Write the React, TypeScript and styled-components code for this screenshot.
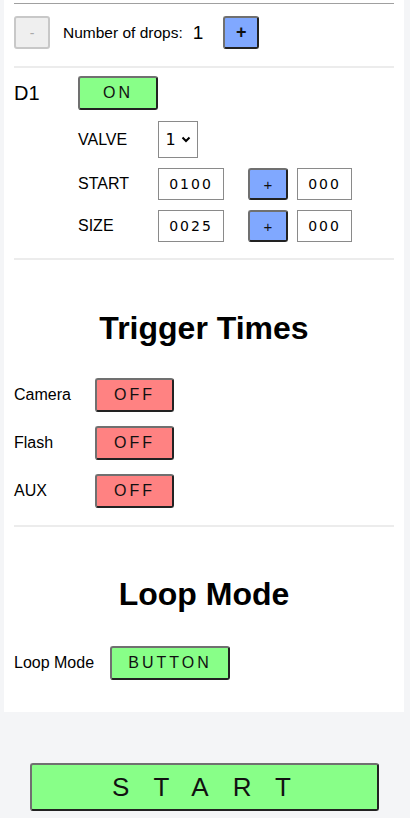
import styled, { createGlobalStyle, css } from 'styled-components'

const GlobalStyle = createGlobalStyle`
  body {
    margin: 0;
    background: #f4f5f7;
    font-family: "Liberation Sans", Arial, sans-serif;
    color: #000;
  }
`

const Page = styled.div`
  width: 410px;
  min-height: 818px;
  display: flex;
  flex-direction: column;
`

const Panel = styled.div`
  margin-left: 4px;
  width: 380px;
  padding: 3px 10px 0;
  height: 709px;
  background: #fff;
`

const Rule = styled.div<{ $dark?: boolean }>`
  height: ${(p) => (p.$dark ? 1 : 2)}px;
  background: ${(p) => (p.$dark ? '#a0a0a0' : '#ececec')};
`

const Row = styled.div`
  display: flex;
  align-items: center;
`

const tones = {
  green: '#88ff88',
  red: '#ff8282',
  blue: '#80a8ff',
}

const Btn = styled.button<{ $tone: keyof typeof tones; $w: number; $h?: number; $spacing?: number }>`
  box-sizing: border-box;
  width: ${(p) => p.$w}px;
  height: ${(p) => p.$h ?? 34}px;
  background: ${(p) => tones[p.$tone]};
  border: 2px solid;
  border-color: #707070 #222 #222 #707070;
  border-radius: 3px;
  font-family: "Liberation Sans", Arial, sans-serif;
  font-size: 16px;
  letter-spacing: ${(p) => p.$spacing ?? 3}px;
  color: #111;
  padding: 0;
  ${(p) =>
    p.$spacing !== undefined &&
    css`
      text-indent: ${p.$spacing}px;
    `}
`

const PlusBtn = styled(Btn)`
  font-size: 15px;
`

const MinusBtn = styled.button`
  box-sizing: border-box;
  width: 36px;
  height: 33px;
  background: #efefef;
  border: 2px solid #c8c8c8;
  border-radius: 3px;
  color: #aaa;
  font-size: 14px;
  padding: 0;
`

const DropsRow = styled(Row)`
  margin-top: 12px;
  height: 33px;
`

const Label = styled.span<{ $w?: number; $size?: number }>`
  display: inline-block;
  width: ${(p) => (p.$w ? `${p.$w}px` : 'auto')};
  font-size: ${(p) => p.$size ?? 16}px;
`

const DropBlock = styled.div`
  margin-top: 8px;
  padding-bottom: 16px;
  display: flex;
  flex-direction: column;
`

const Field = styled.div<{ $w: number; $h?: number }>`
  box-sizing: border-box;
  width: ${(p) => p.$w}px;
  height: ${(p) => p.$h ?? 32}px;
  border: 1px solid #8a8a8a;
  display: flex;
  align-items: center;
  justify-content: center;
  font-family: "DejaVu Sans", sans-serif;
  font-size: 14px;
  letter-spacing: 2px;
`

const Indent = styled.div`
  margin-left: 64px;
  display: flex;
  flex-direction: column;
`

const FieldRow = styled(Row)`
  margin-top: 10px;
`

const Heading = styled.h2`
  margin: 0;
  text-align: center;
  font-size: 32px;
  font-weight: bold;
  line-height: 37px;
`

const Section = styled.div<{ $top: number }>`
  padding-top: ${(p) => p.$top}px;
  display: flex;
  flex-direction: column;
`

const Spacer = styled.div<{ $h: number }>`
  height: ${(p) => p.$h}px;
`

const Chevron = () => (
  <svg width="10" height="7" viewBox="0 0 10 7">
    <path d="M1.5 1.5 L5 5 L8.5 1.5" fill="none" stroke="#000" strokeWidth="2" />
  </svg>
)

const StartWrap = styled.div`
  display: flex;
  justify-content: flex-start;
  padding: 51px 0 0 30px;
`

const StartBtn = styled(Btn)`
  font-size: 26px;
  letter-spacing: 24px;
  text-indent: 18px;
`

export default function App() {
  return (
    <Page>
      <GlobalStyle />
      <Panel>
        <Rule $dark />
        <DropsRow>
          <MinusBtn disabled>-</MinusBtn>
          <Label $size={15.5} style={{ marginLeft: 13 }}>Number of drops:</Label>
          <Label $size={19} style={{ marginLeft: 10 }}>1</Label>
          <PlusBtn $tone="blue" $w={36} $h={33} $spacing={0} style={{ marginLeft: 20, fontSize: 18, fontWeight: 'bold' }}>
            +
          </PlusBtn>
        </DropsRow>
        <Rule style={{ marginTop: 17 }} />
        <DropBlock>
          <Row>
            <Label $w={64} $size={20}>D1</Label>
            <Btn $tone="green" $w={80} $h={34}>ON</Btn>
          </Row>
          <Indent>
            <Row style={{ marginTop: 11 }}>
              <Label $w={80}>VALVE</Label>
              <Field $w={40} $h={37} style={{ gap: 5, letterSpacing: 0, fontSize: 16 }}>
                1 <Chevron />
              </Field>
            </Row>
            <FieldRow>
              <Label $w={80}>START</Label>
              <Field $w={66}>0100</Field>
              <PlusBtn $tone="blue" $w={40} $h={32} $spacing={0} style={{ marginLeft: 24 }}>+</PlusBtn>
              <Field $w={55} style={{ marginLeft: 9 }}>000</Field>
            </FieldRow>
            <FieldRow>
              <Label $w={80}>SIZE</Label>
              <Field $w={66}>0025</Field>
              <PlusBtn $tone="blue" $w={40} $h={32} $spacing={0} style={{ marginLeft: 24 }}>+</PlusBtn>
              <Field $w={55} style={{ marginLeft: 9 }}>000</Field>
            </FieldRow>
          </Indent>
        </DropBlock>
        <Rule />
        <Section $top={50}>
          <Heading>Trigger Times</Heading>
          <Spacer $h={31} />
          {['Camera', 'Flash', 'AUX'].map((name) => (
            <Row key={name} style={{ marginBottom: 14 }}>
              <Label $w={81}>{name}</Label>
              <Btn $tone="red" $w={79}>OFF</Btn>
            </Row>
          ))}
        </Section>
        <Rule style={{ marginTop: 3 }} />
        <Section $top={49}>
          <Heading>Loop Mode</Heading>
          <Spacer $h={33} />
          <Row>
            <Label $w={96}>Loop Mode</Label>
            <Btn $tone="green" $w={120}>BUTTON</Btn>
          </Row>
        </Section>
      </Panel>
      <StartWrap>
        <StartBtn $tone="green" $w={349} $h={48}>START</StartBtn>
      </StartWrap>
    </Page>
  )
}
